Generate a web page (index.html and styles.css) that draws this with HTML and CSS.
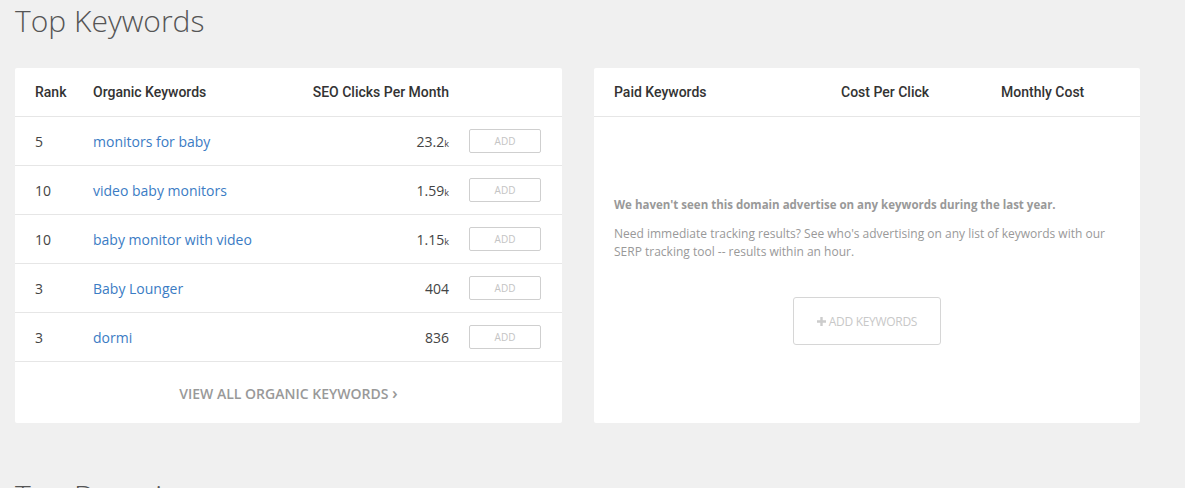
FILE: index.html
```html
<html>
    <head>
        <title>Top Keywords</title>
        <link rel="stylesheet" href="styles.css">
    </head>
    <body>
        <div class="section">
            <h2 class="section-title">Top Keywords</h2>
            <div class="cards">
                <div class="card">
                    <div class="kw-row kw-head">
                        <span>Rank</span>
                        <span>Organic Keywords</span>
                        <span class="num">SEO Clicks Per Month</span>
                        <span></span>
                    </div>
                    <div class="kw-row">
                        <span>5</span>
                        <a href="#">monitors for baby</a>
                        <span class="num">23.2<small>k</small></span>
                        <button class="add-btn">ADD</button>
                    </div>
                    <div class="kw-row">
                        <span>10</span>
                        <a href="#">video baby monitors</a>
                        <span class="num">1.59<small>k</small></span>
                        <button class="add-btn">ADD</button>
                    </div>
                    <div class="kw-row">
                        <span>10</span>
                        <a href="#">baby monitor with video</a>
                        <span class="num">1.15<small>k</small></span>
                        <button class="add-btn">ADD</button>
                    </div>
                    <div class="kw-row">
                        <span>3</span>
                        <a href="#">Baby Lounger</a>
                        <span class="num">404</span>
                        <button class="add-btn">ADD</button>
                    </div>
                    <div class="kw-row">
                        <span>3</span>
                        <a href="#">dormi</a>
                        <span class="num">836</span>
                        <button class="add-btn">ADD</button>
                    </div>
                    <div class="card-foot">
                        <a href="#">VIEW ALL ORGANIC KEYWORDS <span class="chev">&rsaquo;</span></a>
                    </div>
                </div>
                <div class="card">
                    <div class="paid-head">
                        <span>Paid Keywords</span>
                        <span>Cost Per Click</span>
                        <span>Monthly Cost</span>
                    </div>
                    <div class="paid-empty">
                        <p class="empty-lead">We haven't seen this domain advertise on any keywords during the last year.</p>
                        <p class="empty-text">Need immediate tracking results? See who's advertising on any list of keywords with our SERP tracking tool -- results within an hour.</p>
                        <div class="empty-action">
                            <button class="kw-btn"><svg width="9" height="9" viewBox="0 0 9 9"><path d="M3.3 0h2.4v3.3H9v2.4H5.7V9H3.3V5.7H0V3.3h3.3z" fill="#ccc"/></svg> ADD KEYWORDS</button>
                        </div>
                    </div>
                </div>
            </div>
        </div>
        <div class="section">
            <h2 class="section-title">Top Domains</h2>
        </div>
    </body>
</html>
```

FILE: styles.css
```css
body {
    margin: 0;
    padding: 0 15px;
    background: #f0f0f0;
    font-family: "Open Sans", "Liberation Sans", sans-serif;
    color: #444;
}
.section {
    margin-bottom: 52px;
}
.section-title {
    margin: 0 0 28px 0;
    padding-top: 1px;
    height: 39px;
    font-size: 30px;
    line-height: 40px;
    font-weight: 300;
    color: #555;
}
.cards {
    display: flex;
    gap: 32px;
}
.card {
    width: 547px;
    height: 355px;
    background: #fff;
    border-radius: 2px;
}
.card + .card {
    width: 546px;
}

/* organic keywords table */
.kw-row {
    display: grid;
    grid-template-columns: 58px 1fr auto 92px;
    align-items: center;
    height: 48px;
    padding: 0 21px 0 20px;
    border-bottom: 1px solid #e6e6e6;
    font-size: 14px;
}
.kw-head, .paid-head {
    font-family: Roboto, "Liberation Sans", sans-serif;
    font-weight: 500;
    color: #333;
}
.kw-row a {
    color: #3b7cc4;
    text-decoration: none;
}
.num {
    text-align: right;
}
.num small {
    font-size: 9px;
}
.add-btn {
    justify-self: end;
    width: 72px;
    height: 24px;
    padding: 0;
    background: #fff;
    border: 1px solid #cfcfcf;
    border-radius: 2px;
    font-family: "Open Sans", "Liberation Sans", sans-serif;
    font-size: 10px;
    color: #c4c4c4;
}
.card-foot {
    height: 61px;
    display: flex;
    align-items: center;
    justify-content: center;
}
.card-foot a {
    font-size: 14px;
    font-weight: 600;
    color: #999;
    text-decoration: none;
}
.chev {
    font-size: 17px;
}

/* paid keywords */
.paid-head {
    display: grid;
    grid-template-columns: 227px 160px auto;
    align-items: center;
    height: 48px;
    padding: 0 20px;
    border-bottom: 1px solid #e6e6e6;
    font-size: 14px;
}
.paid-empty {
    padding: 79px 20px 0 20px;
    line-height: 18px;
    color: #999;
}
.paid-empty p {
    margin: 0 0 11px 0;
}
.empty-lead {
    font-size: 11.5px;
    font-weight: 700;
}
.empty-text {
    font-size: 12px;
}
.empty-action {
    display: flex;
    justify-content: center;
    padding-top: 25px;
}
.kw-btn {
    width: 148px;
    height: 48px;
    background: #fff;
    border: 1px solid #d6d6d6;
    border-radius: 3px;
    font-family: "Open Sans", "Liberation Sans", sans-serif;
    font-size: 12px;
    color: #c8c8c8;
    letter-spacing: -0.3px;
}
.kw-btn svg {
    vertical-align: -0.5px;
}
```
